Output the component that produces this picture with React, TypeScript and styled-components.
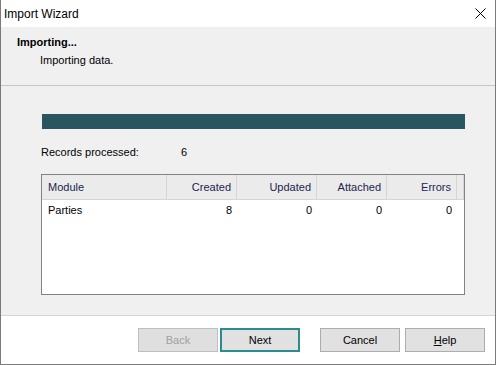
import React from 'react';
import styled, { createGlobalStyle } from 'styled-components';

const GlobalStyle = createGlobalStyle`
  html, body {
    margin: 0;
    padding: 0;
    background: #ffffff;
  }
  * {
    box-sizing: border-box;
  }
`;

const Window = styled.div`
  width: 496px;
  height: 365px;
  display: flex;
  flex-direction: column;
  border: 1px solid #7a7a7a;
  border-top: none;
  background: #ffffff;
  font-family: "Liberation Sans", Arial, sans-serif;
  font-size: 11px;
  color: #000000;
`;

const TitleBar = styled.div`
  height: 27px;
  flex: none;
  display: flex;
  align-items: center;
  justify-content: space-between;
  padding: 0 9px 0 3px;
  background: #ffffff;
`;

const TitleText = styled.span`
  font-size: 12px;
`;

const CloseButton = styled.div`
  width: 11px;
  height: 11px;
  display: flex;
  align-items: center;
  justify-content: center;
`;

const Header = styled.div`
  height: 59px;
  flex: none;
  display: flex;
  flex-direction: column;
  padding: 8px 16px 0;
  background: #f0f0f0;
  border-bottom: 1px solid #c6c6c6;
`;

const HeaderTitle = styled.div`
  font-weight: bold;
  line-height: 15px;
`;

const HeaderSubtitle = styled.div`
  line-height: 15px;
  margin: 3px 0 0 23px;
`;

const Body = styled.div`
  flex: 1;
  display: flex;
  flex-direction: column;
  padding: 28px 30px 0 40px;
  background: #f0f0f0;
  border-bottom: 1px solid #d4d4d4;
`;

const ProgressTrack = styled.div`
  height: 15px;
  background: #e6e6e6;
  margin-left: 1px;
`;

const ProgressFill = styled.div`
  height: 100%;
  background: #285560;
`;

const StatRow = styled.div`
  display: flex;
  align-items: center;
  height: 16px;
  margin-top: 15px;
`;

const StatLabel = styled.span`
  width: 140px;
`;

const Table = styled.div`
  margin-top: 14px;
  height: 121px;
  border: 1px solid #828282;
  background: #ffffff;
  display: flex;
  flex-direction: column;
`;

const Row = styled.div<{ $head?: boolean }>`
  display: grid;
  grid-template-columns: 125px 70px 80px 70px 70px 1fr;
  height: ${p => (p.$head ? '25px' : '19px')};
  background: ${p => (p.$head ? '#ebebeb' : '#ffffff')};
  border-bottom: ${p => (p.$head ? '1px solid #d5d5d5' : 'none')};
  color: ${p => (p.$head ? '#1b2550' : '#000000')};
`;

const Cell = styled.div<{ $num?: boolean; $head?: boolean }>`
  display: flex;
  align-items: center;
  justify-content: ${p => (p.$num ? 'flex-end' : 'flex-start')};
  padding: ${p => (p.$num ? '0 5px 0 0' : '0 0 0 6px')};
  border-right: ${p => (p.$head ? '1px solid #d5d5d5' : 'none')};
  white-space: nowrap;
`;

const Footer = styled.div`
  flex: none;
  height: 48px;
  display: flex;
  justify-content: flex-end;
  align-items: flex-start;
  padding: 12px 10px 0 0;
  background: #ffffff;
`;

const Button = styled.button<{ $default?: boolean; $gap?: number }>`
  width: 80px;
  height: 24px;
  margin-left: ${p => p.$gap ?? 0}px;
  font-family: inherit;
  font-size: 11px;
  color: #000000;
  background: #e1e1e1;
  border: ${p => (p.$default ? '2px solid #2a8c8f' : '1px solid #adadad')};
  border-radius: 0;
  padding: 0;

  &:disabled {
    color: #a0a0a0;
    background: #e0dfdf;
    border-color: #bfbfbf;
  }
`;

const Mnemonic = styled.span`
  text-decoration: underline;
`;

const columns = ['Module', 'Created', 'Updated', 'Attached', 'Errors'];
const rows = [{ module: 'Parties', created: 8, updated: 0, attached: 0, errors: 0 }];

export default function App() {
  const progress = 100;

  return (
    <>
      <GlobalStyle />
      <Window>
        <TitleBar>
          <TitleText>Import Wizard</TitleText>
          <CloseButton>
            <svg width="11" height="11" viewBox="0 0 11 11">
              <path d="M0.5 0.5 L10.5 10.5 M10.5 0.5 L0.5 10.5" stroke="#000" strokeWidth="1" />
            </svg>
          </CloseButton>
        </TitleBar>

        <Header>
          <HeaderTitle>Importing...</HeaderTitle>
          <HeaderSubtitle>Importing data.</HeaderSubtitle>
        </Header>

        <Body>
          <ProgressTrack>
            <ProgressFill style={{ width: `${progress}%` }} />
          </ProgressTrack>

          <StatRow>
            <StatLabel>Records processed:</StatLabel>
            <span>6</span>
          </StatRow>

          <Table>
            <Row $head>
              {columns.map((c, i) => (
                <Cell key={c} $head $num={i > 0}>
                  {c}
                </Cell>
              ))}
              <Cell $head />
            </Row>
            {rows.map(r => (
              <Row key={r.module}>
                <Cell>{r.module}</Cell>
                <Cell $num>{r.created}</Cell>
                <Cell $num>{r.updated}</Cell>
                <Cell $num>{r.attached}</Cell>
                <Cell $num>{r.errors}</Cell>
                <Cell />
              </Row>
            ))}
          </Table>
        </Body>

        <Footer>
          <Button disabled>Back</Button>
          <Button $default $gap={2}>Next</Button>
          <Button $gap={20}>Cancel</Button>
          <Button $gap={5}>
            <Mnemonic>H</Mnemonic>elp
          </Button>
        </Footer>
      </Window>
    </>
  );
}
